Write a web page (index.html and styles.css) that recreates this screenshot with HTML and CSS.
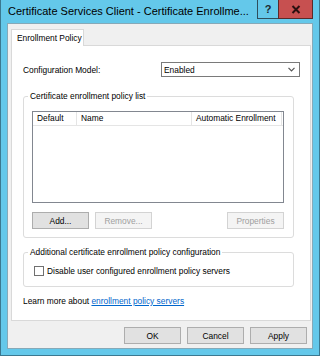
FILE: index.html
```html
<!DOCTYPE html>
<html lang="en">

<head>
    <meta charset="UTF-8">
    <title>Certificate Services Client - Certificate Enrollment Policy</title>
    <link rel="stylesheet" href="styles.css">
</head>

<body>
    <div class="window">
        <div class="titlebar">
            <span class="title">Certificate Services Client - Certificate Enrollme...</span>
            <div class="caption-buttons">
                <span class="cap-btn help">?</span>
                <span class="cap-btn close">
                    <svg width="10" height="9" viewBox="0 0 10 9">
                        <path d="M1.5 1 L8.5 8 M8.5 1 L1.5 8" stroke="#2b1010" stroke-width="2" fill="none" />
                    </svg>
                </span>
            </div>
        </div>

        <div class="client">
            <div class="tabs">
                <span class="tab">Enrollment Policy</span>
            </div>

            <div class="tab-page">
                <div class="config-row">
                    <label>Configuration Model:</label>
                    <div class="select">
                        <span>Enabled</span>
                        <svg width="7" height="5" viewBox="0 0 7 5">
                            <path d="M0.5 0.8 L3.5 3.8 L6.5 0.8" stroke="#555" stroke-width="1.2" fill="none" />
                        </svg>
                    </div>
                </div>

                <fieldset class="group policy-list">
                    <legend>Certificate enrollment policy list</legend>
                    <div class="listview">
                        <div class="lv-header">
                            <span class="col col-default">Default</span>
                            <span class="col col-name">Name</span>
                            <span class="col col-auto">Automatic Enrollment</span>
                        </div>
                    </div>
                    <div class="btn-row">
                        <button class="btn">Add...</button>
                        <button class="btn" disabled>Remove...</button>
                        <button class="btn push-right" disabled>Properties</button>
                    </div>
                </fieldset>

                <fieldset class="group extra-config">
                    <legend>Additional certificate enrollment policy configuration</legend>
                    <label class="check"><span class="box"></span>Disable user configured enrollment policy servers</label>
                </fieldset>

                <p class="learn">Learn more about <a href="#">enrollment policy servers</a></p>
            </div>

            <div class="dialog-buttons">
                <button class="btn">OK</button>
                <button class="btn">Cancel</button>
                <button class="btn">Apply</button>
            </div>
        </div>
    </div>
</body>

</html>
```

FILE: styles.css
```css
body {
    margin: 0;
    font-family: "Liberation Sans", Arial, sans-serif;
    font-size: 8.4px;
    color: #000;
}

.window {
    width: 320px;
    height: 356px;
    box-sizing: border-box;
    background-color: #64c8ea;
    border: 1px solid #3b7890;
    border-top: 0;
    padding: 0 6px 6px;
    display: flex;
    flex-direction: column;
}

/* title bar */
.titlebar {
    height: 23px;
    flex-shrink: 0;
    display: flex;
    align-items: flex-start;
}

.title {
    font-size: 11px;
    line-height: 23px;
    padding-left: 1px;
    white-space: nowrap;
    color: #000;
}

.caption-buttons {
    margin-left: auto;
    display: flex;
}

.cap-btn {
    height: 18px;
    border: 1px solid #2f4e5c;
    border-top: 0;
    display: flex;
    align-items: center;
    justify-content: center;
}

.help {
    width: 20px;
    border-right: 0;
    font-weight: bold;
    font-size: 11px;
    color: #1b2a30;
}

.close {
    width: 33px;
    background-color: #c75050;
    border-color: #5a2a2a;
}

/* client area */
.client {
    flex: 1;
    background-color: #f0f0f0;
    border: 1px solid #86a9b8;
    display: flex;
    flex-direction: column;
}

.tabs {
    display: flex;
    padding: 5px 0 0 3px;
}

.tab {
    width: 66px;
    height: 16px;
    line-height: 16px;
    padding-left: 5px;
    background-color: white;
    border: 1px solid #d9d9d9;
    border-bottom: 0;
    margin-bottom: -1px;
    position: relative;
    white-space: nowrap;
}

.tab-page {
    margin: 0 1px 0 3px;
    background-color: white;
    border: 1px solid #d9d9d9;
    padding: 16px 10px 13px 11px;
}

.config-row {
    display: flex;
    align-items: center;
    justify-content: space-between;
}

.select {
    width: 131px;
    height: 13px;
    border: 1px solid #7a7a7a;
    background-color: white;
    display: flex;
    align-items: center;
    justify-content: space-between;
    padding: 0 4px 0 2px;
}

/* group boxes */
.group {
    margin: 0 6px 0 0;
    padding: 9px 9px 8px 8px;
    border: 1px solid #dcdcdc;
    border-radius: 3px;
    min-width: 0;
}

.group legend {
    padding: 0 2px;
    margin-left: -4px;
    line-height: 12px;
}

.policy-list {
    margin-top: 13px;
}

.extra-config {
    margin-top: 8px;
    padding: 7px 9px 9px 10px;
}

.extra-config legend {
    margin-left: -6px;
}

.listview {
    height: 90px;
    border: 1px solid #828790;
    background-color: white;
}

.lv-header {
    display: flex;
    height: 13px;
    border-bottom: 1px solid #e5e5e5;
}

.col {
    line-height: 13px;
    padding-left: 4px;
    border-right: 1px solid #e5e5e5;
    box-sizing: border-box;
}

.col-default {
    width: 44px;
}

.col-name {
    width: 115px;
}

.col-auto {
    width: 90px;
}

.btn-row {
    display: flex;
    gap: 6px;
    margin-top: 9px;
}

.btn {
    width: 57px;
    height: 17px;
    padding: 0;
    font-family: inherit;
    font-size: inherit;
    color: #000;
    background-color: #e1e1e1;
    border: 1px solid #adadad;
}

.btn:disabled {
    color: #a0a0a0;
    background-color: #f4f4f4;
    border-color: #d3d3d3;
}

.push-right {
    margin-left: auto;
}

.check {
    display: flex;
    align-items: center;
    gap: 3px;
    line-height: 12px;
}

.box {
    width: 8px;
    height: 8px;
    border: 1px solid #707070;
    background-color: white;
}

.learn {
    margin: 8px 0 0;
    line-height: 12px;
}

.learn a {
    color: #0066cc;
}

.dialog-buttons {
    display: flex;
    justify-content: flex-end;
    gap: 6px;
    padding: 6px 5px 0 0;
}
```
